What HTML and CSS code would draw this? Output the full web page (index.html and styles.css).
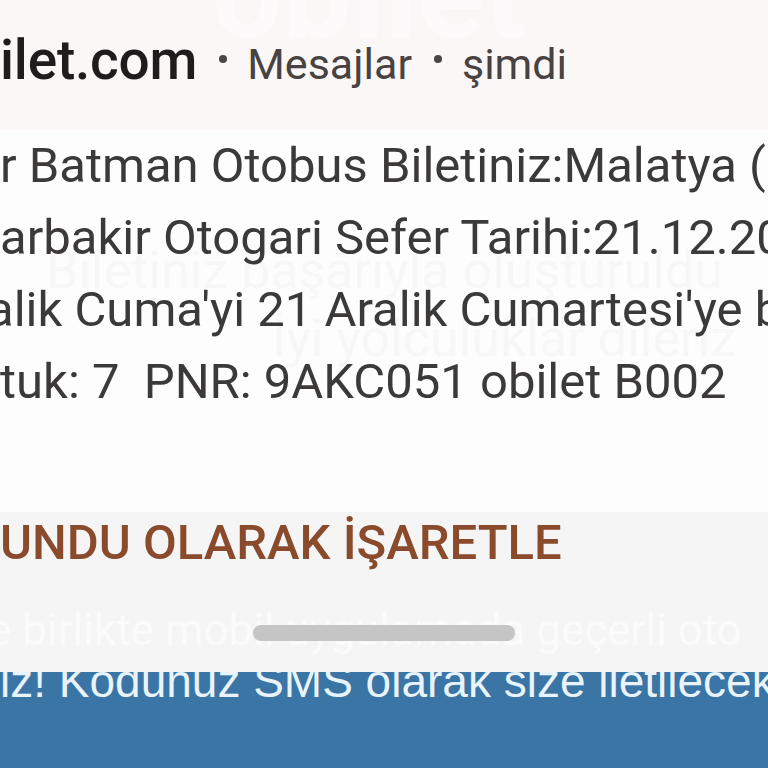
FILE: index.html
```html
<!DOCTYPE html>
<html lang="tr">
<head>
<meta charset="UTF-8">
<meta name="viewport" content="width=device-width, initial-scale=1.0">
<title>obilet.com bildirimi</title>
<link rel="stylesheet" href="styles.css">
</head>
<body>
<div class="screen">
    <div class="notif">
        <div class="head">
            <span class="ghost-logo">obilet</span>
            <span class="app">ilet.com</span>
            <span class="dot"></span>
            <span class="meta">Mesajlar</span>
            <span class="dot"></span>
            <span class="meta">şimdi</span>
        </div>
        <div class="body">
            <span class="ghost ghost-1">Biletiniz başarıyla oluşturuldu</span>
            <span class="ghost ghost-2">İyi yolculuklar dileriz</span>
            <p class="line">r Batman Otobus Biletiniz:Malatya (</p>
            <p class="line">arbakir Otogari Sefer Tarihi:21.12.20</p>
            <p class="line shift">alik Cuma'yi 21 Aralik Cumartesi'ye b</p>
            <p class="line">tuk: 7&nbsp; PNR: 9AKC051 obilet B002</p>
        </div>
        <div class="actions">
            <span class="ghost ghost-3">e birlikte mobil uygulamada geçerli oto</span>
            <span class="action">UNDU OLARAK İŞARETLE</span>
            <div class="handle"></div>
        </div>
    </div>
    <div class="page-bar">
        <span class="page-text">iz! Kodunuz SMS olarak size iletilecek</span>
    </div>
</div>
</body>
</html>
```

FILE: styles.css
```css
body {
    margin: 0;
    padding: 0;
    font-family: Roboto, "Noto Sans", sans-serif;
    background: #3a75a5;
}
.screen {
    width: 768px;
    height: 768px;
    overflow: hidden;
    display: flex;
    flex-direction: column;
}
.notif {
    position: relative;
    z-index: 1;
    background: #fdfdfd;
}
.head {
    position: relative;
    height: 130px;
    background: #faf7f6;
    display: flex;
    align-items: baseline;
    padding-top: 28px;
    box-sizing: border-box;
    white-space: nowrap;
}
.app {
    position: relative;
    font-size: 55px;
    font-weight: 500;
    color: #1e1c1c;
    letter-spacing: -0.2px;
}
.dot {
    position: relative;
    top: -16px;
    width: 8px;
    height: 8px;
    border-radius: 50%;
    background: #4a4545;
    margin: 0 20px 0 22px;
}
.meta {
    position: relative;
    font-size: 43px;
    color: #484242;
}
.ghost-logo {
    position: absolute;
    left: 212px;
    top: -78px;
    font-size: 124px;
    font-weight: 700;
    color: #ffffff;
    opacity: 0.45;
}
.body {
    position: relative;
    height: 382px;
    background: #fdfdfd;
}
.line {
    position: relative;
    margin: 0;
    font-size: 49px;
    line-height: 72px;
    color: #3c3939;
    white-space: nowrap;
}
.shift {
    margin-left: -13px;
}
.ghost {
    position: absolute;
    white-space: nowrap;
    font-size: 52px;
}
.ghost-1 {
    left: 46px;
    top: 110px;
    color: #f7f7f7;
}
.ghost-2 {
    left: 272px;
    top: 178px;
    color: #f7f7f7;
}
.actions {
    position: relative;
    height: 160px;
    background: #f5f5f6;
    display: flex;
    flex-direction: column;
    align-items: center;
}
.action {
    position: relative;
    align-self: flex-start;
    font-size: 49px;
    font-weight: 500;
    line-height: 62px;
    color: #8a4a2c;
    white-space: nowrap;
}
.ghost-3 {
    left: -12px;
    top: 92px;
    color: #fbfbfb;
    font-size: 44px;
}
.handle {
    position: relative;
    margin-top: 51px;
    width: 262px;
    height: 16px;
    border-radius: 8px;
    background: #c5c5c6;
}
.page-bar {
    flex: 1;
    background: #3a75a5;
    overflow: hidden;
}
.page-text {
    display: block;
    margin-top: -13px;
    font-family: "Liberation Sans", Arial, sans-serif;
    font-size: 46px;
    line-height: 44px;
    color: #e8f3fb;
    white-space: nowrap;
}
```
